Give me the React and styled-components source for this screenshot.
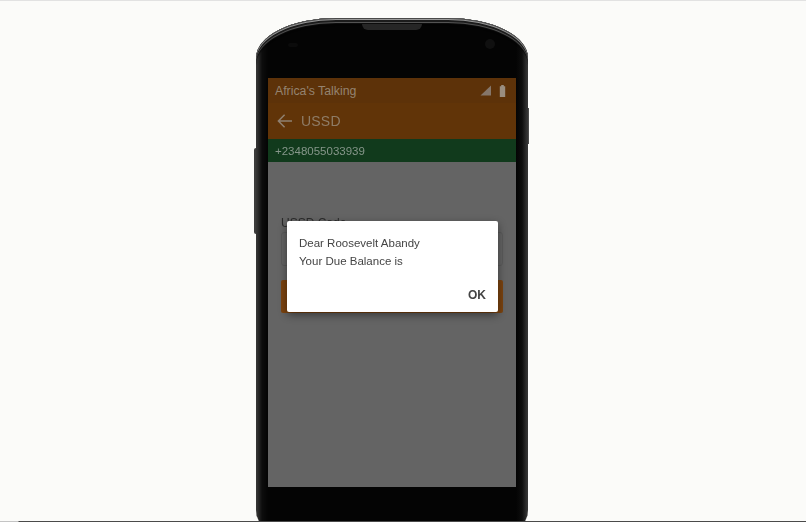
import React from 'react';
import styled, { createGlobalStyle } from 'styled-components';

const GlobalStyle = createGlobalStyle`
  html, body {
    margin: 0;
    height: 100%;
    overflow: hidden;
    background: #fbfbf9;
  }
  #root {
    height: 100%;
  }
`;

export default function App() {
  return (
    <>
      <GlobalStyle />
      <Page>
        <Phone>
          <VolumeKey />
          <PowerKey />
          <Bezel>
            <Earpiece />
            <Sensor />
            <Camera />
            <Screen>
              <StatusBar>
                <span>Africa's Talking</span>
                <StatusIcons>
                  <svg width="13" height="11" viewBox="0 0 13 11">
                    <path d="M12 0.5V10.5H1.5Z" fill="#85766a" />
                  </svg>
                  <svg width="7" height="12" viewBox="0 0 7 12">
                    <path d="M2.2 0H4.8V1.2H6.2V12H0.8V1.2H2.2Z" fill="#9a8e80" />
                  </svg>
                </StatusIcons>
              </StatusBar>
              <Toolbar>
                <svg width="18" height="18" viewBox="0 0 18 18" fill="none" stroke="#8f8070" strokeWidth="1.5">
                  <path d="M16 9H2.5M8.6 2.8L2.4 9l6.2 6.2" />
                </svg>
                <ToolbarTitle>USSD</ToolbarTitle>
              </Toolbar>
              <PhoneNumber>+2348055033939</PhoneNumber>
              <Form>
                <FieldLabel>USSD Code</FieldLabel>
                <FieldInput />
                <SubmitButton />
              </Form>
              <Dialog>
                <DialogText>Dear Roosevelt Abandy</DialogText>
                <DialogText>Your Due Balance is</DialogText>
                <DialogActions>
                  <OkButton>OK</OkButton>
                </DialogActions>
              </Dialog>
            </Screen>
          </Bezel>
        </Phone>
        <BottomLine />
      </Page>
    </>
  );
}

const Page = styled.div`
  position: relative;
  height: 522px;
  box-sizing: border-box;
  display: flex;
  justify-content: center;
  padding: 17px 22px 0 0;
  border-top: 1px solid #e2e2e2;
  overflow: hidden;
  font-family: 'Liberation Sans', Arial, sans-serif;
`;

const BottomLine = styled.div`
  position: absolute;
  left: 0;
  right: 0;
  bottom: 0;
  height: 1px;
  background: linear-gradient(90deg, #c4c4c4 0, #c4c4c4 18px, #4a4a4a 19px);
`;

const Phone = styled.div`
  position: relative;
  flex: none;
  width: 272px;
  height: 522px;
  filter: blur(0.35px);
`;

const VolumeKey = styled.div`
  position: absolute;
  left: -2px;
  top: 130px;
  width: 3px;
  height: 86px;
  background: #3c3c3c;
  border-radius: 2px 0 0 2px;
`;

const PowerKey = styled.div`
  position: absolute;
  right: -1px;
  top: 90px;
  width: 3px;
  height: 36px;
  background: #4a4a4a;
`;

const Bezel = styled.div`
  position: relative;
  box-sizing: border-box;
  height: 100%;
  padding: 60px 12px 0;
  background: linear-gradient(90deg, #3a3a3a 0, #0d0d0d 6px, #040404 12px, #040404 260px, #0d0d0d 266px, #3a3a3a 100%);
  border-radius: 80px 80px 40px 40px / 40px 40px 30px 30px;
  box-shadow:
    inset 0 1px 0 #4a4a4a,
    inset 0 2px 0 #9a9a9a,
    inset 0 4px 0 #1c1c1c,
    inset 0 5px 1px #5c5c5c,
    inset 0 7px 1px #040404;
`;

const Earpiece = styled.div`
  position: absolute;
  top: 6px;
  left: 50%;
  width: 60px;
  height: 6px;
  transform: translateX(-50%);
  background: #262626;
  border-radius: 0 0 14px 14px;
`;

const Sensor = styled.div`
  position: absolute;
  top: 25px;
  left: 32px;
  width: 10px;
  height: 4px;
  border-radius: 2px;
  background: #0b0b0b;
`;

const Camera = styled.div`
  position: absolute;
  top: 21px;
  right: 33px;
  width: 10px;
  height: 10px;
  border-radius: 50%;
  background: #101010;
`;

const Screen = styled.div`
  position: relative;
  height: 409px;
  background: #646464;
  overflow: hidden;
`;

const StatusBar = styled.div`
  height: 25px;
  box-sizing: border-box;
  padding: 0 10px 0 7px;
  display: flex;
  align-items: center;
  justify-content: space-between;
  background: #5d3209;
  color: #948370;
  font-size: 12.3px;
`;

const StatusIcons = styled.div`
  display: flex;
  align-items: center;
  gap: 7px;
`;

const Toolbar = styled.div`
  height: 36px;
  box-sizing: border-box;
  padding-left: 8px;
  display: flex;
  align-items: center;
  gap: 7px;
  background: #613408;
`;

const ToolbarTitle = styled.span`
  color: #8e7c67;
  font-size: 14px;
  letter-spacing: 0.2px;
`;

const PhoneNumber = styled.div`
  height: 23px;
  box-sizing: border-box;
  padding-left: 7px;
  display: flex;
  align-items: center;
  background: #113a1c;
  color: #86968a;
  font-size: 11.5px;
`;

const Form = styled.div`
  padding: 54px 13px 0;
  display: flex;
  flex-direction: column;
`;

const FieldLabel = styled.div`
  color: #2b2b2b;
  font-size: 12px;
  line-height: 14px;
`;

const FieldInput = styled.div`
  height: 32px;
  margin-top: 2px;
  border: 1px solid #5a5a5a;
  border-radius: 3px;
`;

const SubmitButton = styled.div`
  height: 33px;
  margin-top: 14px;
  background: #7b430f;
  border-radius: 2px;
`;

const Dialog = styled.div`
  position: absolute;
  left: 19px;
  top: 143px;
  width: 211px;
  height: 91px;
  box-sizing: border-box;
  padding: 13px 12px 0;
  background: #ffffff;
  border-radius: 2px;
  box-shadow: 0 3px 8px rgba(0, 0, 0, 0.45);
`;

const DialogText = styled.div`
  color: #444444;
  font-size: 11.5px;
  line-height: 18px;
`;

const DialogActions = styled.div`
  display: flex;
  justify-content: flex-end;
  margin-top: 17px;
`;

const OkButton = styled.span`
  color: #444444;
  font-size: 12px;
  font-weight: 700;
  line-height: 16px;
`;
